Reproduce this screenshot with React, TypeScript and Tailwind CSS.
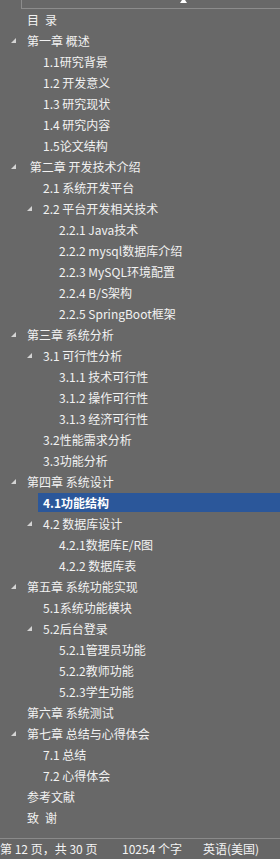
interface NavItem {
  text: string;
  level: number;
  expandable?: boolean;
  active?: boolean;
}

const ITEMS: NavItem[] = [
  { text: "目\u2002录", level: 0 },
  { text: "第一章 概述", level: 0, expandable: true },
  { text: "1.1研究背景", level: 1 },
  { text: "1.2 开发意义", level: 1 },
  { text: "1.3 研究现状", level: 1 },
  { text: "1.4 研究内容", level: 1 },
  { text: "1.5论文结构", level: 1 },
  { text: "\u00a0第二章 开发技术介绍", level: 0, expandable: true },
  { text: "2.1 系统开发平台", level: 1 },
  { text: "2.2 平台开发相关技术", level: 1, expandable: true },
  { text: "2.2.1 Java技术", level: 2 },
  { text: "2.2.2 mysql数据库介绍", level: 2 },
  { text: "2.2.3 MySQL环境配置", level: 2 },
  { text: "2.2.4 B/S架构", level: 2 },
  { text: "2.2.5 SpringBoot框架", level: 2 },
  { text: "第三章 系统分析", level: 0, expandable: true },
  { text: "3.1 可行性分析", level: 1, expandable: true },
  { text: "3.1.1 技术可行性", level: 2 },
  { text: "3.1.2 操作可行性", level: 2 },
  { text: "3.1.3 经济可行性", level: 2 },
  { text: "3.2性能需求分析", level: 1 },
  { text: "3.3功能分析", level: 1 },
  { text: "第四章 系统设计", level: 0, expandable: true },
  { text: "4.1功能结构", level: 1, active: true },
  { text: "4.2 数据库设计", level: 1, expandable: true },
  { text: "4.2.1数据库E/R图", level: 2 },
  { text: "4.2.2 数据库表", level: 2 },
  { text: "第五章 系统功能实现", level: 0, expandable: true },
  { text: "5.1系统功能模块", level: 1 },
  { text: "5.2后台登录", level: 1, expandable: true },
  { text: "5.2.1管理员功能", level: 2 },
  { text: "5.2.2教师功能", level: 2 },
  { text: "5.2.3学生功能", level: 2 },
  { text: "第六章 系统测试", level: 0 },
  { text: "第七章 总结与心得体会", level: 0, expandable: true },
  { text: "7.1 总结", level: 1 },
  { text: "7.2 心得体会", level: 1 },
  { text: "参考文献", level: 0 },
  { text: "致\u2002谢", level: 0 },
];

const INDENT: Record<number, string> = {
  0: "pl-[11px]",
  1: "pl-[27px]",
  2: "pl-[43px]",
};

function Caret() {
  return (
    <svg width="5" height="5" viewBox="0 0 5 5" className="block">
      <polygon points="5,0 5,5 0,5" fill="#d4d4d4" />
    </svg>
  );
}

function NavRow({ item }: { item: NavItem }) {
  return (
    <div className={`flex h-[21px] items-stretch ${INDENT[item.level]}`}>
      <div className="flex w-[11px] shrink-0 items-center">
        {item.expandable && <Caret />}
      </div>
      <div className="flex flex-1 py-px">
        <div
          className={
            item.active
              ? "flex flex-1 items-center bg-[#2b579a] pl-[5px] font-bold text-white"
              : "flex flex-1 items-center pl-[5px] text-[#f2f2f2]"
          }
        >
          <span className="whitespace-nowrap leading-none">{item.text}</span>
        </div>
      </div>
    </div>
  );
}

export default function App() {
  return (
    <div
      className="flex h-[859px] w-[280px] flex-col overflow-hidden bg-[#686868] text-[12px]"
      style={{ fontFamily: '"Noto Sans CJK SC", "Noto Sans", sans-serif' }}
    >
      <div className="h-[9px] shrink-0 pl-[21px]">
        <div className="flex h-[9px] border-b border-l border-[#8c8c8c] pl-[158px]">
          <svg width="7" height="3" viewBox="0 0 7 3" className="block">
            <polygon points="2,0 5,0 7,3 0,3" fill="#ffffff" />
          </svg>
        </div>
      </div>

      <div className="flex flex-col">
        {ITEMS.map((item) => (
          <NavRow key={item.text} item={item} />
        ))}
      </div>

      <div className="flex-1" />

      <div className="flex h-[21px] shrink-0 items-center border-t border-[#8a8a8a] bg-[#666666] text-[12px] text-[#f4f4f4]">
        <span className="w-[122px] whitespace-nowrap">第 12 页，共 30 页</span>
        <span className="w-[81px] whitespace-nowrap">10254 个字</span>
        <span className="whitespace-nowrap">英语(美国)</span>
      </div>
    </div>
  );
}
